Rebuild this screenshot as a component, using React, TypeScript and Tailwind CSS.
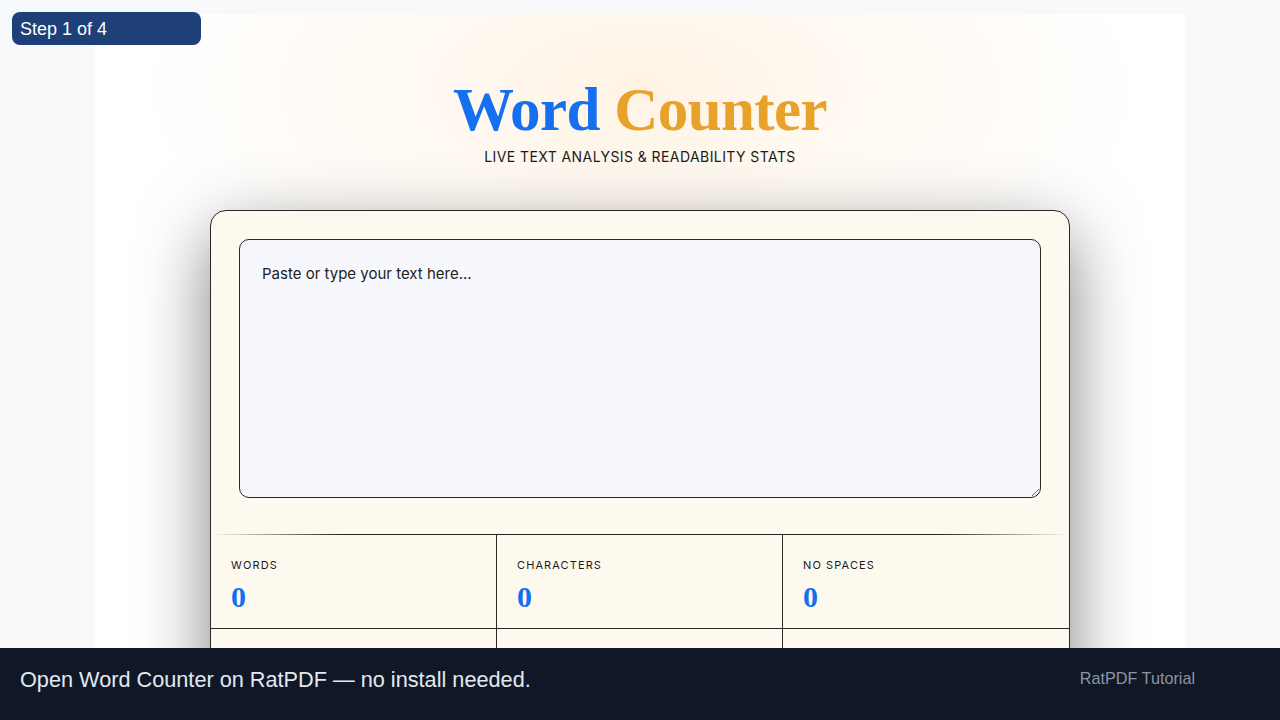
import { useState } from "react";

const stats = [
  { label: "WORDS", value: 0 },
  { label: "CHARACTERS", value: 0 },
  { label: "NO SPACES", value: 0 },
];

export default function App() {
  const [text, setText] = useState("");

  return (
    <div className="min-h-screen bg-[#f8f9fb] pt-[14px] font-['Inter',sans-serif]">
      {/* STEP BADGE */}
      <div className="fixed left-3 top-3 z-20 flex h-[33px] w-[189px] items-center rounded-lg bg-[#1e3f78] pl-2 pt-px font-['Liberation_Sans',Arial,sans-serif] text-[18px] text-white">
        Step 1 of 4
      </div>

      <div className="mx-auto w-[1090px] bg-[radial-gradient(ellipse_520px_260px_at_50%_10%,#fff3e4_0%,#fffaf3_45%,#ffffff_100%)] pt-[66px] pb-10">
        <h1 className="text-center font-['Liberation_Serif',serif] text-[61px] font-bold leading-[60px] tracking-[-0.01em]">
          <span className="text-[#1570ef]">Word</span>{" "}
          <span className="text-[#e8a22b]">Counter</span>
        </h1>
        <p className="mt-[7px] text-center text-[14px] leading-5 tracking-[0.03em] text-[#1c1a17]">
          LIVE TEXT ANALYSIS &amp; READABILITY STATS
        </p>

        <div className="mx-auto mt-[43px] w-[860px] overflow-hidden rounded-2xl border border-[#2b2621] bg-[#fdf9ef] shadow-[0_24px_70px_rgba(0,0,0,0.5)]">
          <div className="px-7 pt-7 pb-9">
            <textarea
              value={text}
              onChange={(e) => setText(e.target.value)}
              placeholder="Paste or type your text here..."
              className="block h-[259px] w-full rounded-[10px] border border-[#2b2621] bg-[#f6f8fd] px-[22px] py-[22px] text-[15px] leading-6 text-[#1c1a17] outline-none placeholder:text-[#1f1d1a]"
            />
          </div>

          <div className="h-px bg-[linear-gradient(90deg,transparent_0%,#2b2621_15%,#2b2621_85%,transparent_100%)]" />

          <div className="grid grid-cols-3">
            {stats.map((s, i) => (
              <div
                key={s.label}
                className={`h-[94px] border-b border-[#2b2621] pl-5 pt-[22px] ${
                  i !== 2 ? "border-r" : ""
                }`}
              >
                <p className="text-[11px] leading-4 tracking-[0.1em] text-[#1c1a17]">
                  {s.label}
                </p>
                <p className="mt-[8px] font-['Liberation_Serif',serif] text-[30px] font-bold leading-8 text-[#1570ef]">
                  {s.value}
                </p>
              </div>
            ))}
            {/* second row, sits under the bottom bar */}
            <div className="h-[94px] border-r border-b border-[#2b2621]" />
            <div className="h-[94px] border-r border-b border-[#2b2621]" />
            <div className="h-[94px] border-b border-[#2b2621]" />
          </div>
        </div>
      </div>

      {/* BOTTOM BAR */}
      <div className="fixed inset-x-0 bottom-0 z-20 flex h-[72px] items-center justify-between bg-[#101828] pb-2 pl-5 pr-[85px] font-['Liberation_Sans',Arial,sans-serif]">
        <span className="text-[21.7px] text-[#e2e8f0]">
          Open Word Counter on RatPDF — no install needed.
        </span>
        <span className="-mt-[4px] text-[16.2px] text-[#8b95a7]">RatPDF Tutorial</span>
      </div>
    </div>
  );
}
